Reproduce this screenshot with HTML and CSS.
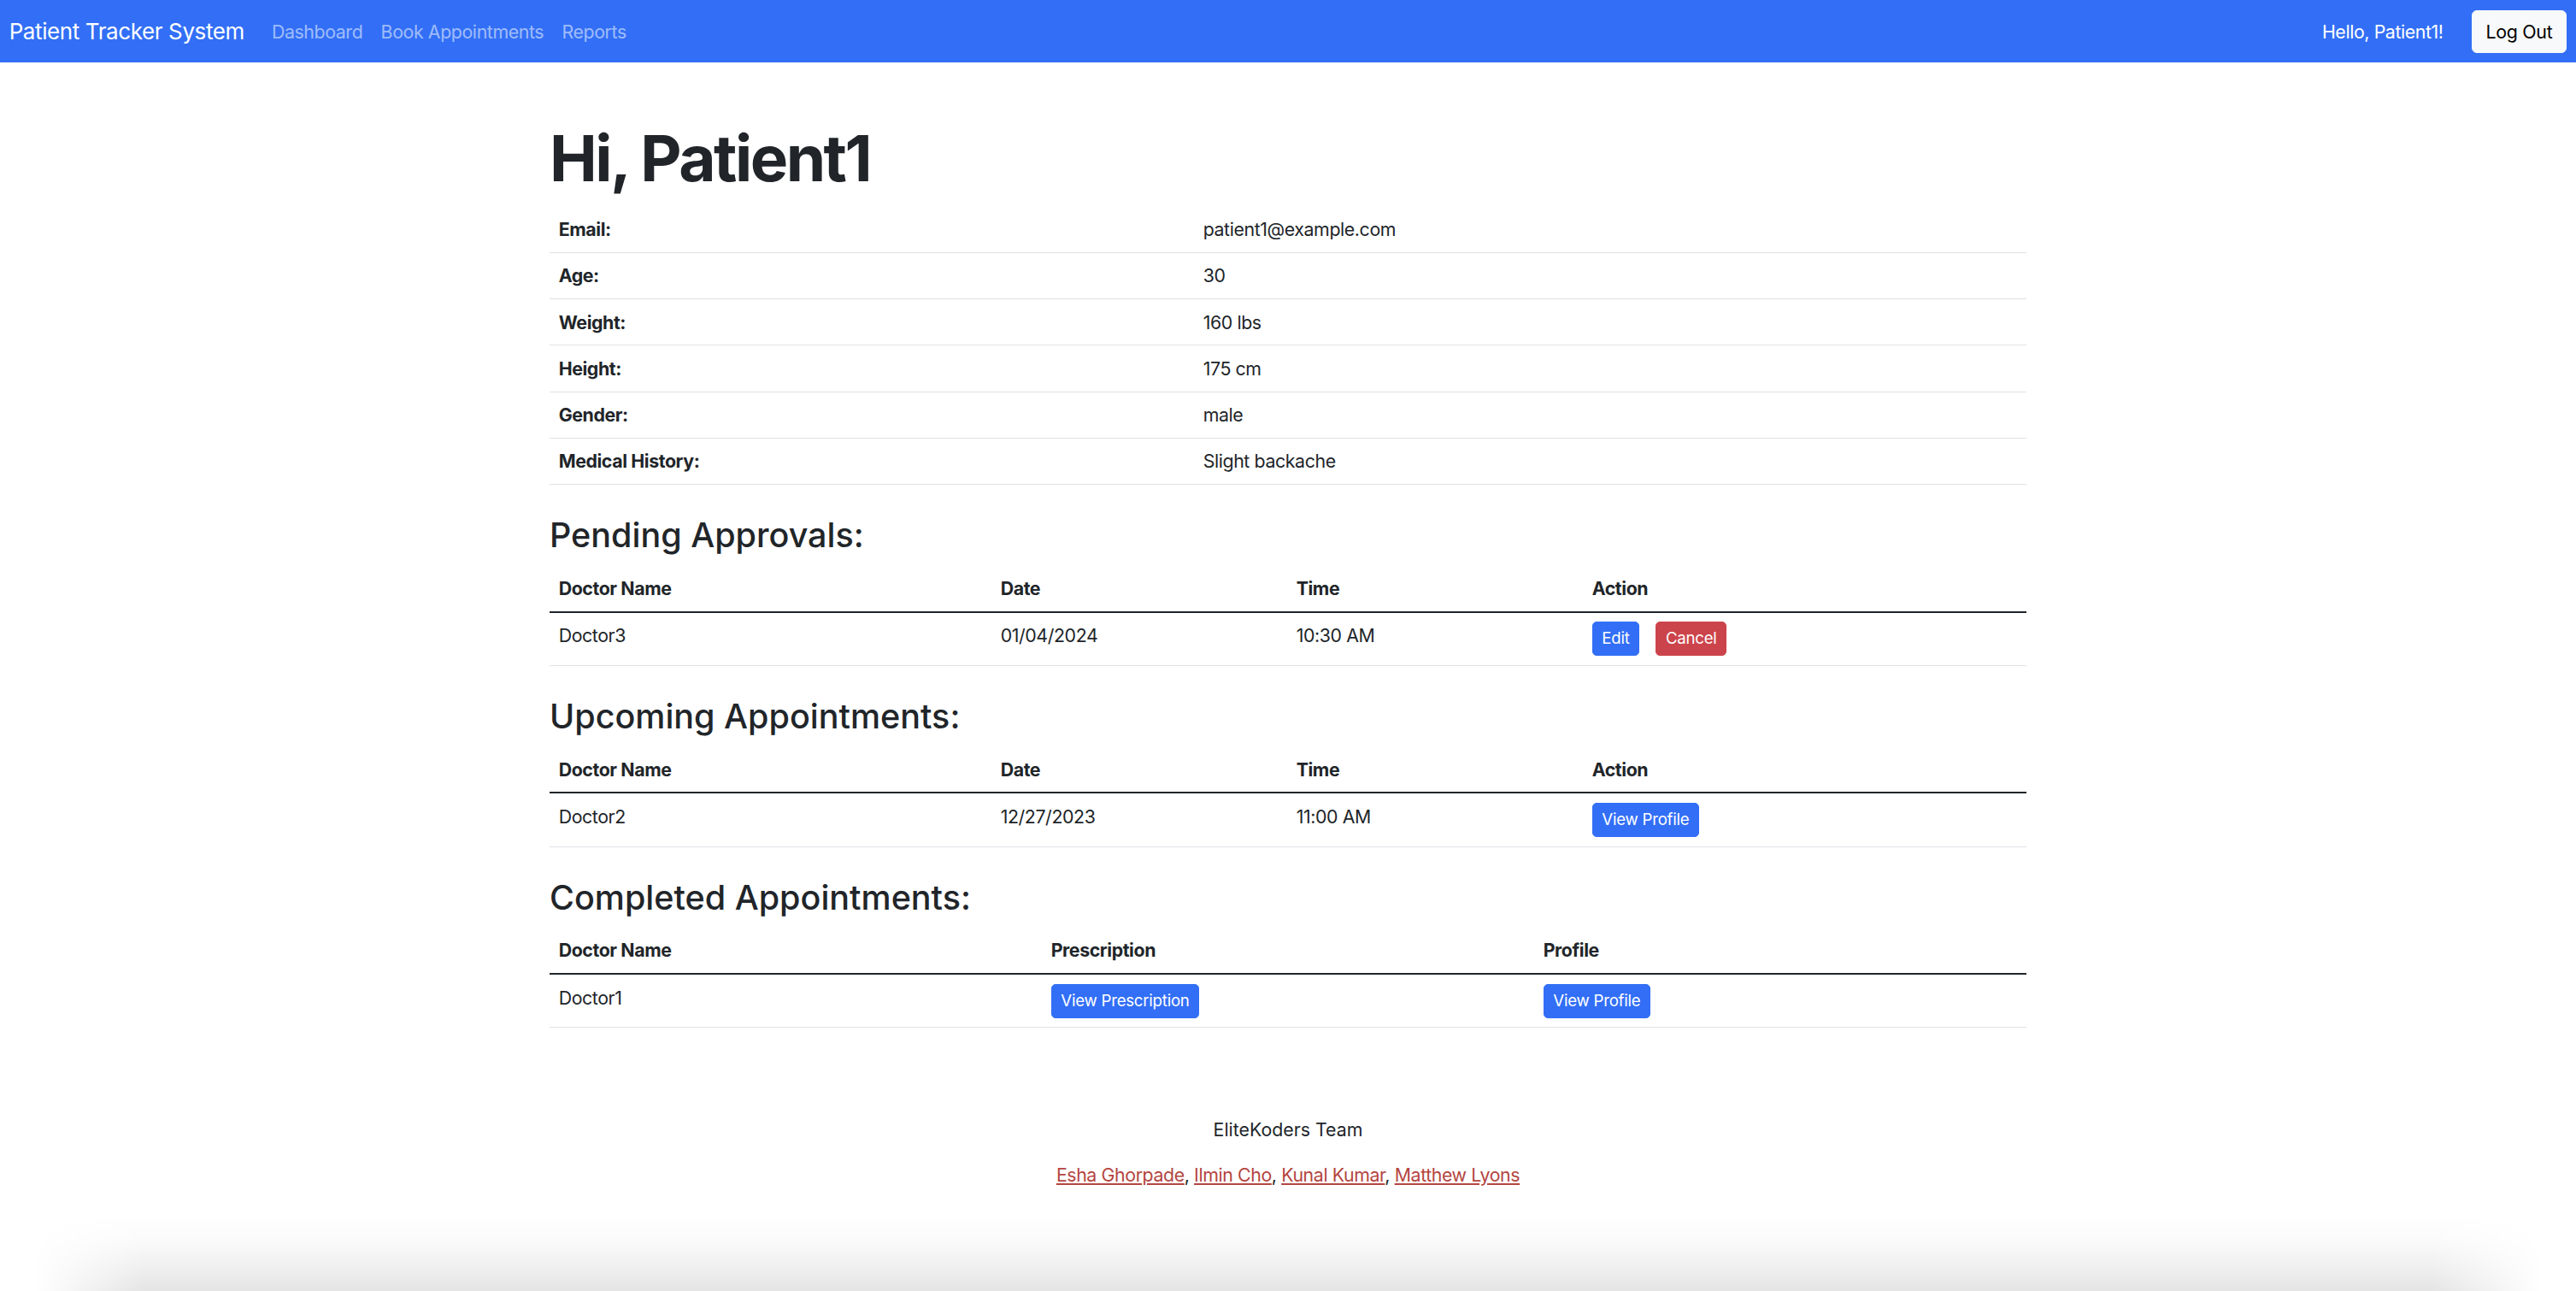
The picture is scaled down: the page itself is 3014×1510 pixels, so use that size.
FILE: index.html
```html
<!DOCTYPE html>
<html lang="en">
<head>
<meta charset="utf-8">
<title>Patient Tracker System</title>
<link rel="stylesheet" href="styles.css">
</head>
<body>
<nav class="navbar">
  <div class="nav-left">
    <a class="brand" href="#">Patient Tracker System</a>
    <ul class="nav-links">
      <li><a href="#">Dashboard</a></li>
      <li><a href="#">Book Appointments</a></li>
      <li><a href="#">Reports</a></li>
    </ul>
  </div>
  <div class="nav-right">
    <span class="hello">Hello, Patient1!</span>
    <button class="btn btn-light">Log Out</button>
  </div>
</nav>

<main class="container">
  <h1 class="greeting">Hi, Patient1</h1>
  <table class="table info">
    <colgroup><col class="col-label"><col></colgroup>
    <tbody>
      <tr><th>Email:</th><td>patient1@example.com</td></tr>
      <tr><th>Age:</th><td>30</td></tr>
      <tr><th>Weight:</th><td>160 lbs</td></tr>
      <tr><th>Height:</th><td>175 cm</td></tr>
      <tr><th>Gender:</th><td>male</td></tr>
      <tr><th>Medical History:</th><td>Slight backache</td></tr>
    </tbody>
  </table>

  <h3 class="section-title">Pending Approvals:</h3>
  <table class="table appts">
    <colgroup><col class="c-name"><col class="c-date"><col class="c-time"><col class="c-action"></colgroup>
    <thead><tr><th>Doctor Name</th><th>Date</th><th>Time</th><th>Action</th></tr></thead>
    <tbody>
      <tr><td>Doctor3</td><td>01/04/2024</td><td>10:30 AM</td><td><div class="actions"><button class="btn btn-sm btn-primary">Edit</button><button class="btn btn-sm btn-danger">Cancel</button></div></td></tr>
    </tbody>
  </table>

  <h3 class="section-title">Upcoming Appointments:</h3>
  <table class="table appts">
    <colgroup><col class="c-name"><col class="c-date"><col class="c-time"><col class="c-action"></colgroup>
    <thead><tr><th>Doctor Name</th><th>Date</th><th>Time</th><th>Action</th></tr></thead>
    <tbody>
      <tr><td>Doctor2</td><td>12/27/2023</td><td>11:00 AM</td><td><button class="btn btn-sm btn-primary">View Profile</button></td></tr>
    </tbody>
  </table>

  <h3 class="section-title">Completed Appointments:</h3>
  <table class="table appts">
    <colgroup><col class="c-third"><col class="c-third"><col class="c-third"></colgroup>
    <thead><tr><th>Doctor Name</th><th>Prescription</th><th>Profile</th></tr></thead>
    <tbody>
      <tr><td>Doctor1</td><td><button class="btn btn-sm btn-primary">View Prescription</button></td><td><button class="btn btn-sm btn-primary">View Profile</button></td></tr>
    </tbody>
  </table>
</main>

<footer class="footer">
  <p class="team">EliteKoders Team</p>
  <p><a href="#">Esha Ghorpade</a>, <a href="#">Ilmin Cho</a>, <a href="#">Kunal Kumar</a>, <a href="#">Matthew Lyons</a></p>
</footer>

<div class="shade"></div>
</body>
</html>
```

FILE: styles.css
```css
* { box-sizing: border-box; }

html, body { margin: 0; padding: 0; }

body {
  font-family: Inter, "Liberation Sans", sans-serif;
  font-size: 21.33px;
  line-height: 32px;
  letter-spacing: -0.4px;
  color: #212529;
  background: #fff;
  min-height: 100vh;
  display: flex;
  flex-direction: column;
}

a { text-decoration: none; }

/* Navbar */
.navbar {
  height: 73px;
  padding: 0 10.67px;
  background: #326ff6;
  display: flex;
  align-items: center;
  justify-content: space-between;
  flex-shrink: 0;
}
.nav-left { display: flex; align-items: center; }
.brand {
  color: #fff;
  font-size: 26px;
  line-height: 40px;
  margin-right: 21.33px;
}
.nav-links {
  list-style: none;
  margin: 0;
  padding: 0;
  display: flex;
}
.nav-links a {
  display: block;
  padding: 0 10.67px;
  color: rgba(255, 255, 255, 0.55);
}
.nav-right { display: flex; align-items: center; }
.hello { color: #fff; margin-right: 33px; }

/* Buttons */
.btn {
  font-family: inherit;
  font-size: 21.33px;
  line-height: 32px;
  letter-spacing: -0.3px;
  padding: 8px 16px;
  border: 1px solid transparent;
  border-radius: 6px;
  cursor: pointer;
}
.btn-light { background: #f8f9fa; border-color: #f8f9fa; color: #000; }
.btn-sm {
  font-size: 18.67px;
  line-height: 28px;
  letter-spacing: -0.25px;
  padding: 5px 10.67px;
  border-radius: 5px;
}
.btn-primary { background: #326ff6; border-color: #326ff6; color: #fff; }
.btn-danger { background: #cc444b; border-color: #cc444b; color: #fff; }
.actions { display: flex; gap: 19px; }

/* Content */
.container {
  width: 1728px;
  margin: 0 auto;
  padding-top: 68px;
}
.greeting {
  font-size: 74.67px;
  line-height: 89.6px;
  font-weight: 700;
  letter-spacing: -2.5px;
  margin: 0 0 10.67px;
}
.section-title {
  font-size: 39.5px;
  line-height: 47.4px;
  font-weight: 500;
  letter-spacing: 0;
  margin: 36px 0 10.67px;
}

.table {
  width: 100%;
  border-collapse: collapse;
  table-layout: fixed;
  margin-bottom: 21.33px;
}
.table th, .table td {
  padding: 10.67px;
  text-align: left;
  vertical-align: top;
  border-bottom: 1px solid #dee2e6;
}
.table th { font-weight: 700; }
.table td { font-weight: 400; }
.appts thead th { border-bottom: 2px solid #212529; }

.col-label { width: 754px; }
.c-name { width: 517px; }
.c-date { width: 346px; }
.c-time { width: 346px; }
.c-action { width: 519px; }
.c-third { width: 576px; }

/* Footer */
.footer {
  text-align: center;
  margin-top: 81px;
}
.footer p { margin: 0 0 21.33px; }
.footer .team { letter-spacing: 0; }
.footer a {
  color: #b4453f;
  text-decoration: underline;
}

.shade {
  margin: auto 40px 0;
  height: 88px;
  flex-shrink: 0;
  background: linear-gradient(to bottom, rgba(0,0,0,0) 0%, rgba(0,0,0,0.015) 30%, rgba(0,0,0,0.05) 60%, rgba(0,0,0,0.105) 100%);
  -webkit-mask-image: linear-gradient(to right, transparent 0, #000 130px, #000 calc(100% - 130px), transparent 100%);
  mask-image: linear-gradient(to right, transparent 0, #000 130px, #000 calc(100% - 130px), transparent 100%);
}
```
